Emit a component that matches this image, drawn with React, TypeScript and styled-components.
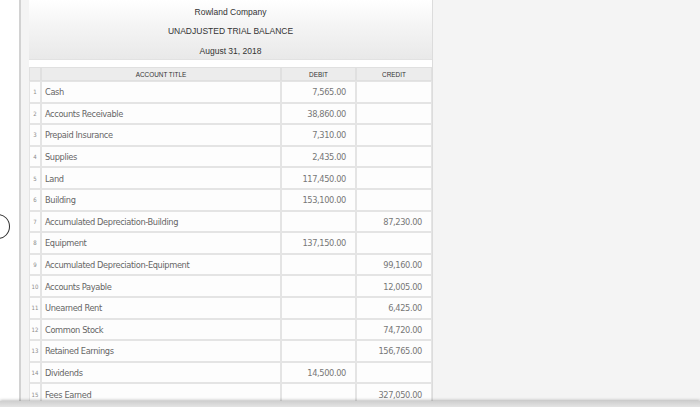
import React from "react";
import styled, { createGlobalStyle } from "styled-components";

type Row = { title: string; debit?: string; credit?: string };

const rows: Row[] = [
  { title: "Cash", debit: "7,565.00" },
  { title: "Accounts Receivable", debit: "38,860.00" },
  { title: "Prepaid Insurance", debit: "7,310.00" },
  { title: "Supplies", debit: "2,435.00" },
  { title: "Land", debit: "117,450.00" },
  { title: "Building", debit: "153,100.00" },
  { title: "Accumulated Depreciation-Building", credit: "87,230.00" },
  { title: "Equipment", debit: "137,150.00" },
  { title: "Accumulated Depreciation-Equipment", credit: "99,160.00" },
  { title: "Accounts Payable", credit: "12,005.00" },
  { title: "Unearned Rent", credit: "6,425.00" },
  { title: "Common Stock", credit: "74,720.00" },
  { title: "Retained Earnings", credit: "156,765.00" },
  { title: "Dividends", debit: "14,500.00" },
  { title: "Fees Earned", credit: "327,050.00" },
];

const GlobalStyle = createGlobalStyle`
  html, body {
    margin: 0;
    padding: 0;
    background: #fff;
    overflow: hidden;
  }
  body {
    font-family: "DejaVu Sans Condensed", "Liberation Sans Narrow", "Liberation Sans", Arial, sans-serif;
  }
`;

export default function App() {
  return (
    <>
      <GlobalStyle />
      <Page>
        <Gutter>
          <CircleButton />
        </Gutter>
        <Main>
          <Sheet>
            <Heading>
              <HeadLine>Rowland Company</HeadLine>
              <HeadLine>UNADJUSTED TRIAL BALANCE</HeadLine>
              <HeadLine>August 31, 2018</HeadLine>
            </Heading>
            <Table>
              <colgroup>
                <col style={{ width: 12 }} />
                <col style={{ width: 240 }} />
                <col style={{ width: 75 }} />
                <col style={{ width: 76 }} />
              </colgroup>
              <thead>
                <tr>
                  <Th />
                  <Th>ACCOUNT TITLE</Th>
                  <Th>DEBIT</Th>
                  <Th>CREDIT</Th>
                </tr>
              </thead>
              <tbody>
                {rows.map((r, i) => (
                  <tr key={r.title}>
                    <NumCell>{i + 1}</NumCell>
                    <TitleCell>{r.title}</TitleCell>
                    <AmountCell>{r.debit}</AmountCell>
                    <AmountCell>{r.credit}</AmountCell>
                  </tr>
                ))}
              </tbody>
            </Table>
          </Sheet>
        </Main>
      </Page>
      <BottomBar />
    </>
  );
}

const Page = styled.div`
  display: flex;
  height: 407px;
  overflow: hidden;
`;

const Gutter = styled.div`
  position: relative;
  width: 19px;
  flex-shrink: 0;
  background: #fff;
`;

const CircleButton = styled.div`
  position: absolute;
  left: -14px;
  top: 214px;
  width: 22px;
  height: 23px;
  border: 1.6px solid #2e2e2e;
  border-radius: 50%;
`;

const Main = styled.div`
  flex: 1;
  display: flex;
  align-items: flex-start;
  background: #f4f4f4;
  border-left: 2px solid #d2d2d2;
  padding-left: 8px;
`;

const Sheet = styled.div`
  width: 403px;
  height: 100%;
  background: #fff;
  border-right: 1px solid #dcdcdc;
  display: flex;
  flex-direction: column;
`;

const Heading = styled.div`
  box-sizing: border-box;
  height: 60px;
  padding-top: 2.5px;
  background: linear-gradient(#ffffff 0%, #f4f4f4 45%, #e9e9e9 100%);
  border-bottom: 1px solid #e2e2e2;
  display: flex;
  flex-direction: column;
  align-items: center;
`;

const HeadLine = styled.div`
  font-family: "Liberation Sans", Arial, sans-serif;
  font-size: 8.5px;
  line-height: 19.5px;
  color: #333;
`;

const Table = styled.table`
  margin-top: 7px;
  width: 403px;
  table-layout: fixed;
  border-collapse: separate;
  border-spacing: 0;
`;

const Th = styled.th`
  height: 12px;
  padding: 0;
  background: #ececec;
  border: 1px solid #e0e0e0;
  font-family: "Liberation Sans", Arial, sans-serif;
  font-size: 6.4px;
  font-weight: 400;
  color: #333;
  text-align: center;
  vertical-align: middle;
`;

const Cell = styled.td`
  box-sizing: border-box;
  height: 21.6px;
  padding: 0;
  background: #fdfdfd;
  border: 1px solid #e4e4e4;
  vertical-align: middle;
  white-space: nowrap;
  overflow: hidden;
`;

const NumCell = styled(Cell)`
  font-size: 6px;
  color: #8a8a8a;
  text-align: center;
`;

const TitleCell = styled(Cell)`
  padding-left: 3px;
  font-size: 9.2px;
  letter-spacing: -0.38px;
  color: #666;
`;

const AmountCell = styled(Cell)`
  padding-right: 9px;
  font-size: 9.2px;
  letter-spacing: -0.38px;
  color: #777;
  text-align: right;
`;

const BottomBar = styled.div`
  position: fixed;
  left: 0;
  right: 0;
  bottom: 0;
  height: 6px;
  background: linear-gradient(#cfcfcf, #e4e4e4);
  box-shadow: 0 -1px 3px rgba(0, 0, 0, 0.25);
`;
